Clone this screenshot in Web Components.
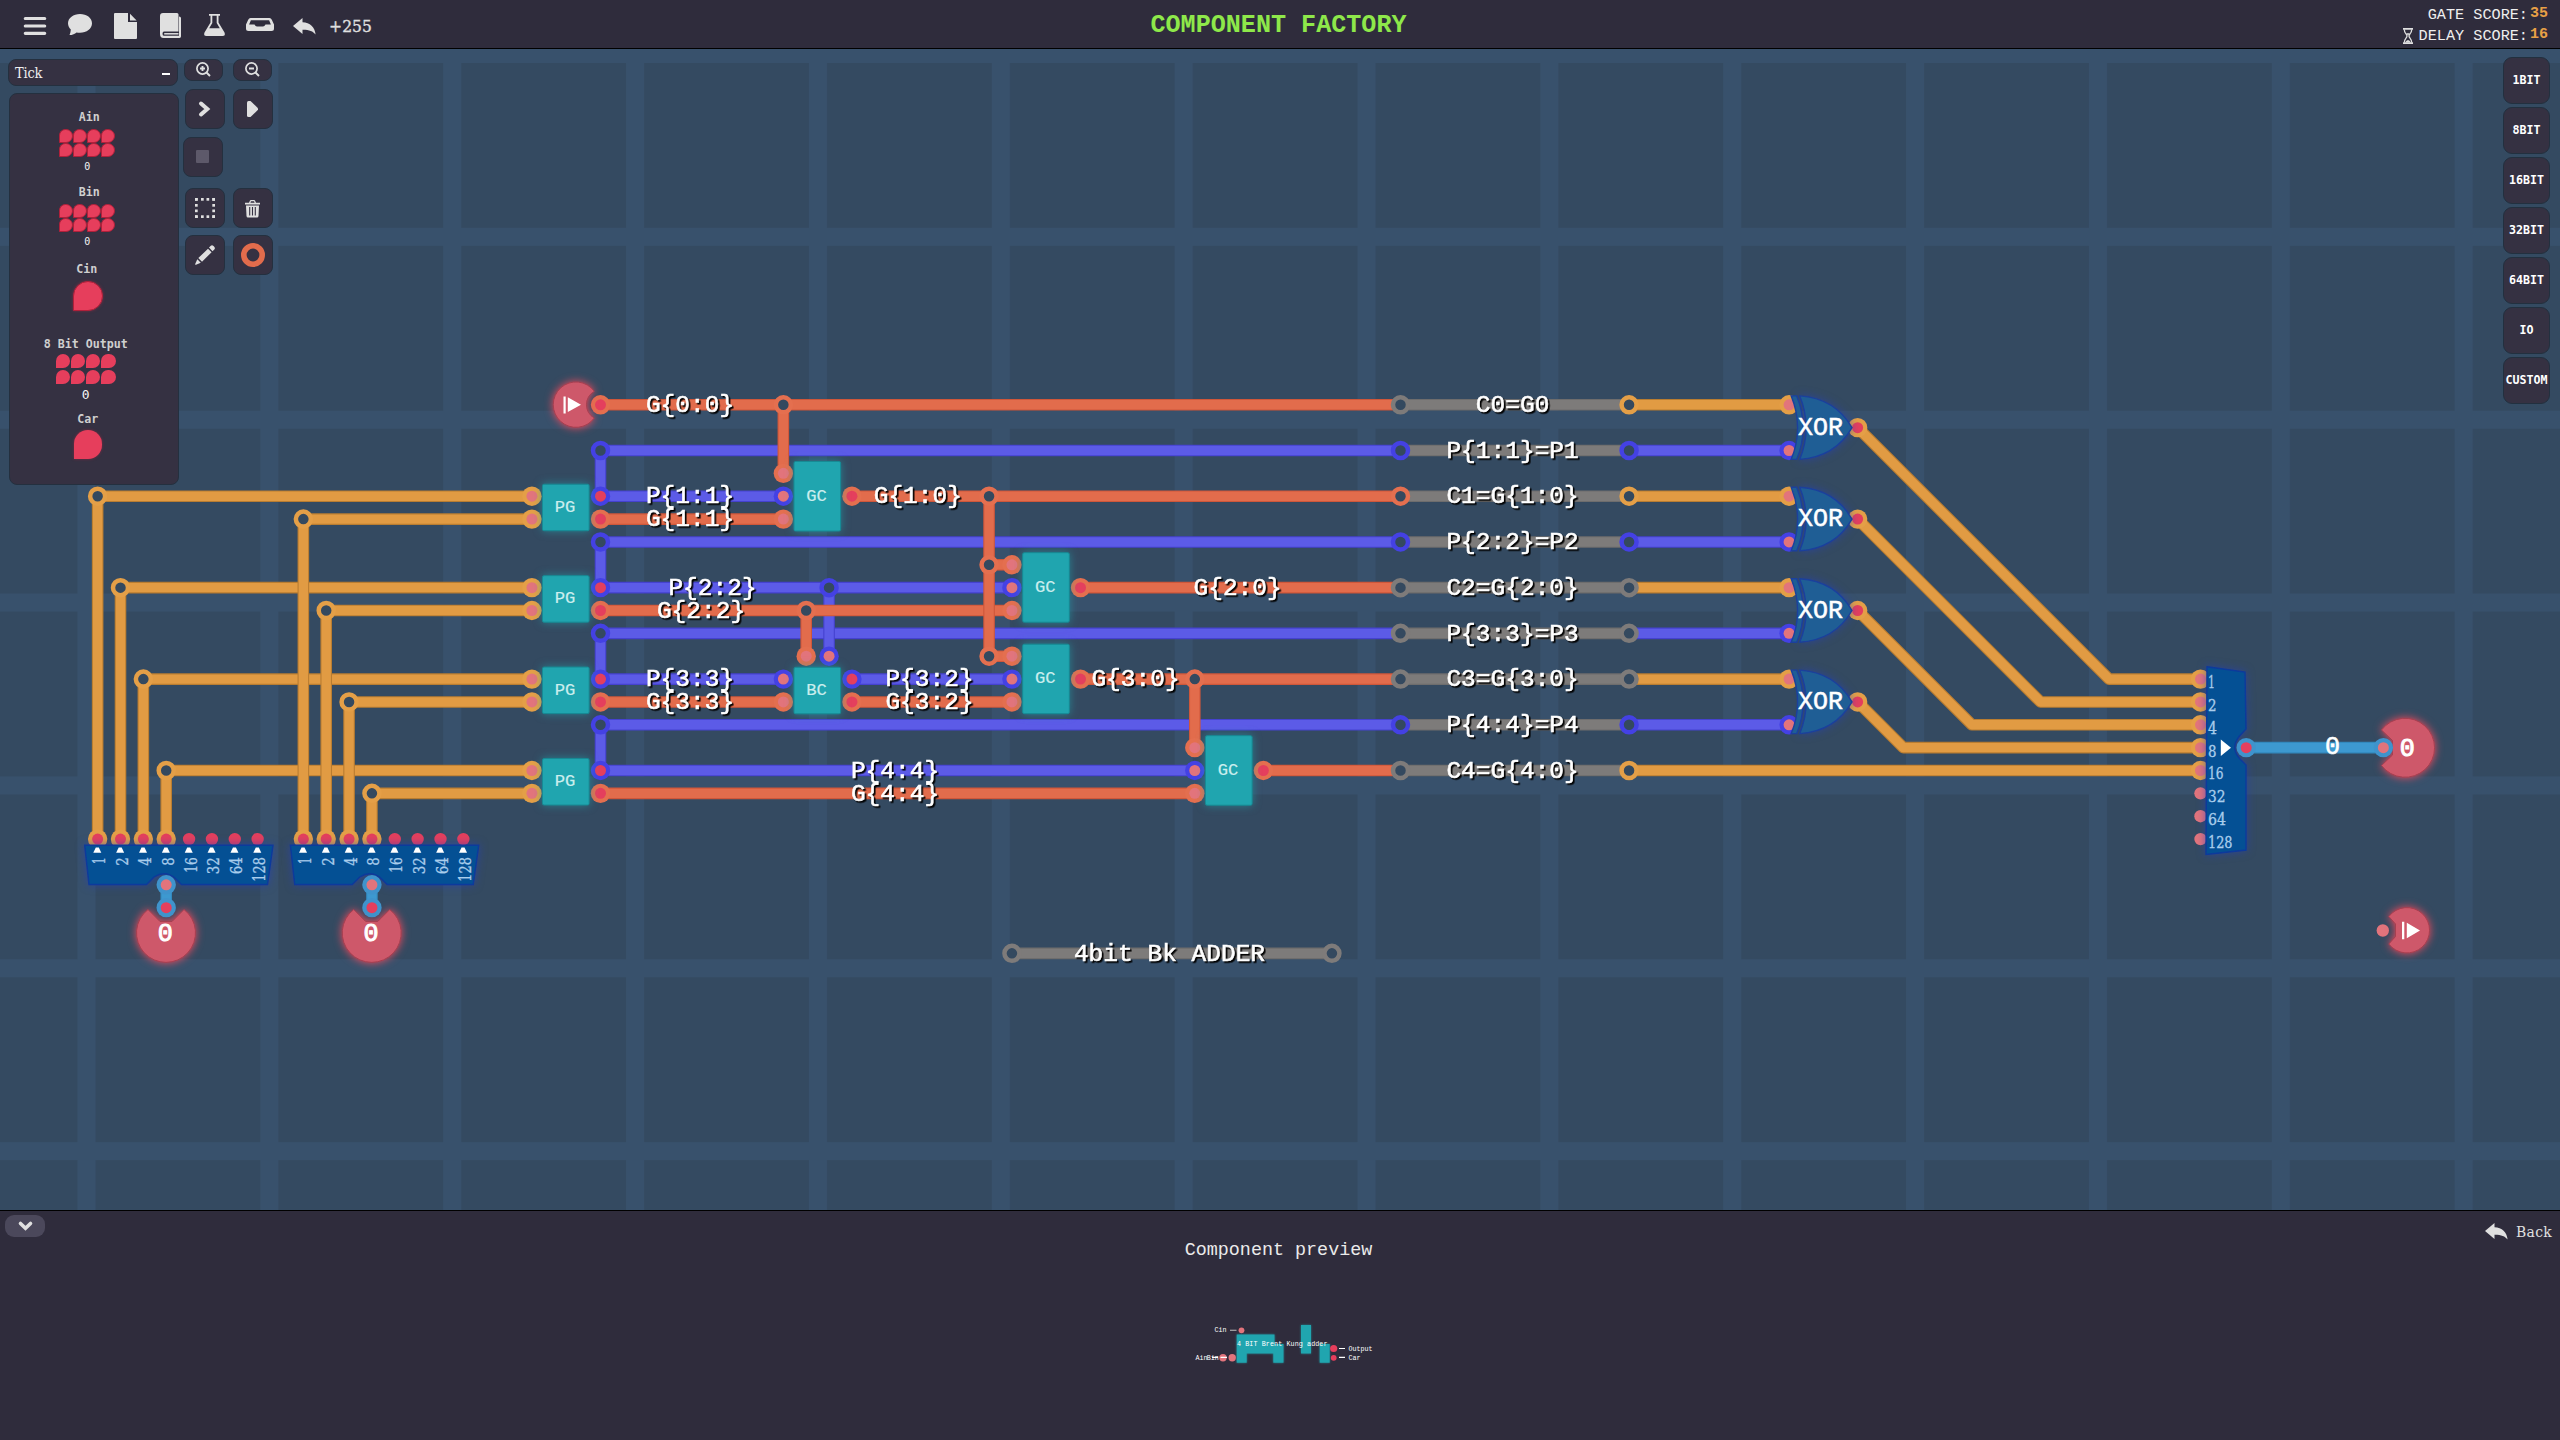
<!DOCTYPE html>
<html lang="en">
<head>
<meta charset="utf-8">
<title>Component Factory</title>
<style>
html,body{margin:0;height:100%;background:#344a61;overflow:hidden}
body{font-family:"Liberation Mono",monospace;color:#fff}
</style>
</head>
<body>
<factory-app></factory-app>
<script>
const define=(name,markup,setup)=>{
  customElements.define(name,class extends HTMLElement{
    connectedCallback(){
      if(this.shadowRoot)return;
      const root=this.attachShadow({mode:'open'});
      root.innerHTML=typeof markup==='function'?markup(this):markup;
      if(setup)setup(this,root);
    }
  });
};

/* ---------- icons ---------- */
const ICONS={
  menu:[22,18,'<path d="M1.3 1.5H20.7M1.3 9H20.7M1.3 16.3H20.7" stroke="#e0e0e0" stroke-width="3.2" stroke-linecap="round"/>'],
  chat:[24,22,'<path d="M12 0C5.4 0 0 4 0 9.3c0 2.6 1.2 4.700 2.800 6.300C2.600 17.800 2.300 19.800 1.500 21c3 0 5.400-1.300 7-2.600 1.100.3 2.300.4 3.500.4 6.600 0 12-4.100 12-9.500S18.600 0 12 0z"/>'],
  file:[23,26,'<path d="M1 0H14V9H23V25Q23 26 22 26H1Q0 26 0 25V1Q0 0 1 0zM16 .8L22.600 7.600H16z"/>'],
  book:[21,25,'<path fill-rule="evenodd" d="M3 0H17Q18.500 0 18.500 1.500V18.500H4Q2.500 18.600 2.500 20.800T4 22.800H19V3.400Q21 3.400 21 5V23.500Q20.700 25 19.200 25H3.500Q0 25 0 21V3Q0 0 3 0z"/><path d="M4.200 20.800H18.500" stroke="#e0e0e0" stroke-width="1.500"/>'],
  flask:[21,22,'<path fill-rule="evenodd" d="M5 0H16V1.800H14.500V8.500L20.500 18.500Q21.800 22 18.500 22H2.500Q-.8 22 .5 18.500L6.500 8.500V1.800H5zM8.300 1.800V9L5.200 14.200H15.800L12.700 9V1.800z"/>'],
  tray:[28,13,'<path fill-rule="evenodd" d="M4.500 0H23.500Q25 .2 25.800 1.800L28 6.500V10.500Q28 13 25.500 13H2.500Q0 13 0 10.500V6.500L2.200 1.800Q3 .2 4.500 0zM4.900 2.300L3.100 6.600H8.500Q9.500 8.500 11 8.500H17Q18.500 8.500 19.500 6.600H24.900L23.100 2.300z"/>'],
  reply:[23,17,'<path d="M9.500 0V4.200C17 4.500 22 9 22.600 16.500 20 13 16 11.600 9.500 11.700V16L0 8z"/>'],
  hourglass:[10,16,'<path d="M0 .9H10M0 15.100H10" stroke="#e0e0e0" stroke-width="1.800"/><path d="M1.300 1.500C1.300 5.500 4 6 4 8S1.300 10.500 1.300 14.500M8.700 1.500C8.700 5.500 6 6 6 8S8.700 10.500 8.700 14.500" fill="none" stroke="#e0e0e0" stroke-width="1.300"/><path d="M2 14.500Q5 9.500 8 14.500zM3.200 5.200H6.800L5 7.500z"/>'],
  zoomin:[15,15,'<circle cx="6.500" cy="6.500" r="5.600" fill="none" stroke="#e0e0e0" stroke-width="1.700"/><path d="M10.500 10.500L14 14M6.500 4V9M4 6.500H9" stroke="#e0e0e0" stroke-width="1.900"/>'],
  zoomout:[15,15,'<circle cx="6.500" cy="6.500" r="5.600" fill="none" stroke="#e0e0e0" stroke-width="1.700"/><path d="M10.500 10.500L14 14M4 6.500H9" stroke="#e0e0e0" stroke-width="1.900"/>'],
  next:[11,16,'<path d="M2 2.500L8.300 8L2 13.500" fill="none" stroke="#e0e0e0" stroke-width="4" stroke-linecap="round" stroke-linejoin="miter"/>'],
  play:[11,16,'<path d="M0 1.500Q0 0 1.500 0H3.500L11 7.200V8.800L3.500 16H1.500Q0 16 0 14.500z"/>'],
  stop:[13,13,'<rect width="13" height="13" rx="1" fill="#5d596a"/>'],
  select:[20,20,(()=>{let s='';for(const i of [0,6,11.500,17.300])s+=`<rect x="${i}" y="0" width="2.700" height="2.700"/><rect x="${i}" y="17.300" width="2.700" height="2.700"/><rect x="0" y="${i}" width="2.700" height="2.700"/><rect x="17.300" y="${i}" width="2.700" height="2.700"/>`;return s})()],
  trash:[15,18,'<path fill-rule="evenodd" d="M0 2.700H4L5 .6Q5.300 0 6 0H9Q9.700 0 10 .6L11 2.700H15V4.500H0zM5.400 2.700H9.600L9 1.300H6zM1 5.500H14L13.500 16Q13.400 17.500 12 17.500H3Q1.600 17.500 1.500 16z"/><path d="M4.700 7V15.500M7.500 7V15.500M10.300 7V15.500" stroke="#353142" stroke-width="1.100"/>'],
  pencil:[20,20,'<path d="M14 2.500L15.800.7Q17.200-.3 18.500 1L19.200 1.800Q20.500 3.200 19.300 4.500L17.500 6.300zM13 3.700L16.600 7.200 7 16.800 3.300 13.100zM2.300 14.300L5.800 17.800 1 19.700Q0 20 .2 18.900z"/>'],
  ring:[24,24,'<circle cx="12" cy="12" r="9.200" fill="none" stroke="#e26c4c" stroke-width="5.600"/>'],
  down:[15,10,'<path d="M2.500 2.500L7.500 7.300L12.500 2.500" fill="none" stroke="#e0e0e0" stroke-width="3.600" stroke-linecap="round"/>']
};
define('icon-glyph',h=>{
  const [w,ht,body]=ICONS[h.getAttribute('name')];
  return `<style>:host{display:block;flex:none;width:${w}px;height:${ht}px}svg{display:block;overflow:visible;fill:#e0e0e0}</style><svg width="${w}" height="${ht}" viewBox="0 0 ${w} ${ht}">${body}</svg>`;
});

/* ---------- top bar ---------- */
define('score-line',`<style>
:host{display:flex;align-items:center;justify-content:flex-end;height:20.500px;font-size:15.200px;color:#eee;white-space:pre}
b{font-size:15px;color:#e8a046;margin:-3px 0 0 2px}
</style><slot name="icon"></slot><span><slot></slot></span><b><slot name="value"></slot></b>`);

define('top-bar',`<style>
:host{display:grid;grid-template-columns:1fr auto 1fr;height:48px;background:#2f2c3c;border-bottom:1px solid #000;box-sizing:content-box}
.left{display:flex;align-items:center;padding:0 0 2px 24px;gap:22px}
.left span{font:17.300px "DejaVu Serif Condensed","DejaVu Serif",serif;color:#e0e0e0;margin:2px 0 0 -9px;letter-spacing:.1px;-webkit-text-stroke:.3px #e0e0e0}
h1{margin:0 0 0 -3px;padding-top:1px;font:bold 25.100px/50px "Liberation Mono",monospace;color:#8ee84a}
.right{padding:5px 12px 0 0}
</style>
<div class="left"><icon-glyph name="menu" style="margin-top:3px"></icon-glyph><icon-glyph name="chat"></icon-glyph><icon-glyph name="file" style="margin-top:3px"></icon-glyph><icon-glyph name="book" style="margin:2px 0 0 1px"></icon-glyph><icon-glyph name="flask" style="margin:1px 0 0 1px"></icon-glyph><icon-glyph name="tray" style="margin-left:-1px"></icon-glyph><icon-glyph name="reply" style="margin:3px 0 0 -3px"></icon-glyph><span>+255</span></div>
<h1>COMPONENT FACTORY</h1>
<div class="right"><score-line>GATE SCORE:<span slot="value">35</span></score-line><score-line><icon-glyph slot="icon" name="hourglass" style="margin-right:6px"></icon-glyph>DELAY SCORE:<span slot="value">16</span></score-line></div>`);

/* ---------- circuit ---------- */
const U=160/7, X=i=>+(600.5+i*U).toFixed(2), Y=j=>+(404.8+j*U).toFixed(2);
const COL={
  o:['#e19b43','#b97d31','#e49f47'], r:['#e26c4c','#cf573a','#e46f4f'],
  b:['#5c5be7','#4542cf','#4441e4'], g:['#7d7b7a','#6e6d6d','#7e7b7a'], s:['#3d99d0','#3389bd','#3f93cc']
};
const wire=(c,...p)=>{
  const pts=p.map(([i,j])=>X(i)+','+Y(j)).join(' ');
  return `<polyline points="${pts}" stroke="${COL[c][1]}" stroke-width="11.600"/><polyline points="${pts}" stroke="${COL[c][0]}" stroke-width="9.400"/>`;
};
const node=(c,i,j)=>`<circle cx="${X(i)}" cy="${Y(j)}" r="7.500" fill="#34495f" stroke="${COL[c][2]}" stroke-width="4.500"/>`;
const pin=(c,i,j,out)=>(c?`<circle cx="${X(i)}" cy="${Y(j)}" r="9.700" fill="${COL[c][2]}"/>`:'')+`<circle cx="${X(i)}" cy="${Y(j)}" r="${c?5.500:6.200}" fill="${out?'#e43f5d':'#e2747c'}"/>`;
const label=(t,x,j)=>`<text class="lab" x="${x}" y="${Y(j)+7.200}">${t}</text>`;
const block=(t,x,y,h)=>`<rect x="${x}" y="${y}" width="46.600" height="${h}" rx="1.500" fill="#20a5af" stroke="#178a94" stroke-width="1" filter="url(#teal)"/><text class="blk" x="${x+22.600}" y="${y+h/2+4.300}">${t}</text>`;

function circuit(){
  let w='',n='',p='',b='',t='';
  for(let k=0;k<4;k++){
    const r=4+4*k;
    w+=wire('o',[-22+k,19],[-22+k,r],[-3,r]);
    n+=node('o',-22+k,r);
    p+=pin('o',-3,r)+pin('o',-3,r+1);
    b+=block('PG',542.500,Y(r)-12,46.500);
  }
  for(let k=0;k<4;k++){
    const r=5+4*k;
    w+=wire('o',[-13+k,19],[-13+k,r],[-3,r]);
    n+=node('o',-13+k,r);
  }
  w+=wire('r',[0,0],[35,0]);
  for(const r of [2,6,10,14]){ w+=wire('b',[0,r+2],[0,r],[35,r]); n+=node('b',0,r); }
  w+=wire('b',[0,4],[8,4])+wire('r',[0,5],[8,5])+wire('b',[0,8],[18,8])+wire('b',[10,8],[10,11])+wire('r',[0,9],[18,9])+wire('r',[9,9],[9,11]);
  w+=wire('b',[0,12],[8,12])+wire('r',[0,13],[8,13])+wire('b',[11,12],[18,12])+wire('r',[11,13],[18,13]);
  w+=wire('b',[0,16],[26,16])+wire('r',[0,17],[26,17]);
  w+=wire('r',[8,0],[8,3])+wire('r',[11,4],[35,4])+wire('r',[21,8],[35,8])+wire('r',[21,12],[35,12])+wire('r',[29,16],[35,16]);
  w+=wire('r',[17,4],[17,11],[18,11])+wire('r',[17,7],[18,7])+wire('r',[26,12],[26,15]);
  n+=node('r',8,0)+node('r',17,4)+node('r',17,7)+node('r',17,11)+node('b',10,8)+node('r',9,9)+node('r',26,12);
  p+=pin('r',0,0,1);
  for(const r of [4,8,12,16]) p+=pin('b',0,r,1)+pin('r',0,r+1,1);
  for(const [i,r] of [[8,3],[18,7],[18,11],[26,15]]) p+=pin('r',i,r)+pin('b',i,r+1)+pin('r',i,r+2)+pin('r',i+3,r+1,1);
  p+=pin('b',8,12)+pin('r',8,13)+pin('r',9,11)+pin('b',10,11)+pin('b',11,12,1)+pin('r',11,13,1);
  b+=block('GC',794,461.500,69.500)+block('GC',1022.700,552.700,69.500)+block('GC',1022.700,644.200,69.500)+block('GC',1205.500,735.700,69.500)+block('BC',794,667.300,46.500);

  const names=['C0=G0','P{1:1}=P1','C1=G{1:0}','P{2:2}=P2','C2=G{2:0}','P{3:3}=P3','C3=G{3:0}','P{4:4}=P4','C4=G{4:0}'];
  const L='gbrbgggbg',R='obobgggbo';
  names.forEach((s,k)=>{
    const r=2*k;
    w+=wire('g',[35,r],[45,r])+wire(k%2?'b':'o',[45,r],[k==8?70:52,r]);
    n+=node(L[k],35,r)+node(R[k],45,r);
    t+=label(s,1512.600,r);
    if(k<8)p+=pin(k%2?'b':'o',52,r);
  });
  [[1,66,12],[5,63,13],[9,60,14],[13,57,15]].forEach(([r,i,j])=>{
    w+=wire('o',[55,r],[i,j],[70,j]);
    p+=pin('o',55,r,1);
    const y=Y(r);
    b+=`<g transform="translate(1790.700 ${y-32.300})" fill="#1f5e95" stroke="#1b409d" stroke-width="1.400"><path filter="url(#blue)" d="M9 .5C31 2 49 11 61.300 32.300C49 53.500 31 62.600 9 64C17.500 44 17.500 21 9 .5z"/><path d="M.5.5H6C14.500 21 14.500 44 6 64H.5C9 44 9 21 .5.5z"/></g><text class="xor" x="1820.600" y="${y+7.200}">XOR</text>`;
  });
  for(let k=0;k<8;k++) p+=pin(k<5?'o':'',70,12+k);

  /* byte splitters */
  for(const o of [-22,-13]){
    const dx=X(o)-97.640, bits=[1,2,4,8,16,32,64,128];
    w+=wire('s',[o+3,21],[o+3,22]);
    b+=`<g transform="translate(${dx.toFixed(2)} 0)"><path filter="url(#blue)" fill="#045094" stroke="#0d3a9c" stroke-width="1.400" d="M84.700 845.300H273L267.500 884.500H181.500L176.500 879.500Q166 869.500 154 877L146.500 884.500H89z"/>`;
    bits.forEach((v,k)=>{
      const x=97.300+k*U;
      p+=pin(k<4?'o':'',o+k,19,1);
      const len=[7,8.500,8.500,8.500,15.500,17,17,24.500][k];
      b+=`<path d="M${x-4} 852.800L${x-1.500} 847.500H${x+1.500}L${x+4} 852.800z" fill="#fff"/><text class="slab" text-anchor="end" textLength="${len}" lengthAdjust="spacingAndGlyphs" transform="translate(${x+7.800} 857.200) rotate(-90)">${v}</text>`;
    });
    b+=`<path filter="url(#red)" fill="#ce586a" stroke="#a63f50" stroke-width="1" d="M148 909.500L160 921.500H172L184 909.500A29.500 29.500 0 1 1 148 909.500z"/><text class="num" x="165.200" y="941.300">0</text></g>`;
    t+=pin('s',o+3,21)+pin('s',o+3,22,1);
  }
  /* byte maker */
  b+=`<path filter="url(#blue)" fill="#045094" stroke="#0d3a9c" stroke-width="1.400" d="M2207 666.800L2245 672L2246 729L2239.500 736Q2230 747.500 2239.500 758.500L2246 765V850L2206 854.500z"/><path d="M2220.800 739.500L2231 747.700L2220.800 756z" fill="#fff"/>`;
  [1,2,4,8,16,32,64,128].forEach((v,k)=>{
    b+=`<text class="slab" x="2208" y="${Y(12+k)+8.900}" textLength="${[7,8.500,9,8.500,15.500,17.500,18,24.500][k]}" lengthAdjust="spacingAndGlyphs">${v}</text>`;
  });
  w+=wire('s',[72,15],[78,15]);
  b+=`<path filter="url(#red)" fill="#ce586a" stroke="#a63f50" stroke-width="1" d="M2381.500 730L2392.500 740.500V755L2381.500 765.500A29.500 29.500 0 1 0 2381.500 730z"/><text class="num" x="2407.300" y="755.800">0</text>`;
  t+=pin('s',72,15,1)+pin('s',78,15)+`<text class="num" style="stroke-width:.6" x="2332.500" y="753.500">0</text>`;
  /* one-bit input and carry output */
  b+=`<path filter="url(#red)" fill="#ce586a" stroke="#a63f50" stroke-width="1" d="M594.300 391.300Q586.500 396 586.500 404.700Q586.500 413.500 594.300 418A22.700 22.700 0 1 1 594.300 391.300z"/><path fill="#fff" d="M563.500 396.500H565.700V413.500H563.500zM567.800 397.300L581 404.700L567.800 412z"/>`;
  b+=`<path filter="url(#red)" fill="#ce586a" stroke="#a63f50" stroke-width="1" d="M2388.800 916.500L2395.500 924V936.500L2388.800 944A22.700 22.700 0 1 0 2388.800 916.500z"/><path fill="#fff" d="M2402 921.700H2404.300V939.200H2402zM2406.800 922.800L2420 930.500L2406.800 938.200z"/>`;
  p+=`<circle cx="2382.800" cy="930.500" r="6.200" fill="#e2747c"/>`;

  w+=wire('g',[18,24],[32,24]); n+=node('g',18,24)+node('g',32,24);
  t+=label('4bit Bk ADDER',1169.500,24);
  for(const [s,x,j] of [['G{0:0}',690,0],['P{1:1}',690,4],['G{1:1}',690,5],['G{1:0}',917.800,4],['P{2:2}',712.500,8],['G{2:2}',701,9],['P{3:3}',690,12],['G{3:3}',690,13],['P{3:2}',929.500,12],['G{3:2}',929.500,13],['G{2:0}',1237.600,8],['G{3:0}',1135.500,12],['P{4:4}',895,16],['G{4:4}',895,17]]) t+=label(s,x,j);
  return w+n+p+b+t;
}
define('circuit-board',()=>`<style>
:host{display:block;background:#344a61;overflow:hidden}
svg{display:block}
polyline{fill:none;stroke-linejoin:round}
text{font-family:"Liberation Mono",monospace}
.lab{font-size:24.500px;fill:#fff;text-anchor:middle;stroke:#fff;stroke-width:.6px;filter:url(#hard)}
.blk{font-size:17.200px;fill:#cbeeee;text-anchor:middle;stroke:#cbeeee;stroke-width:.2px}
.xor{font-size:25px;fill:#fff;text-anchor:middle;stroke:#fff;stroke-width:.5px}
.num{font-size:25px;fill:#fff;text-anchor:middle;stroke:#fff;stroke-width:1px}
.slab{font:16.500px "DejaVu Serif Condensed","DejaVu Serif",serif;fill:#a9cdec;stroke:#a9cdec;stroke-width:.3px}
</style>
<svg width="2560" height="1161" viewBox="0 49 2560 1161">
<defs>
<pattern id="grid" width="${8*U}" height="${8*U}" patternUnits="userSpaceOnUse" x="77.500" y="45"><path d="M0 0H${8*U}V18H18V${8*U}H0z" fill="#38516c"/></pattern>
<filter id="hard" x="-5%" y="-10%" width="110%" height="130%" color-interpolation-filters="sRGB"><feDropShadow dx="1.600" dy="1.600" stdDeviation="0" flood-color="#000" flood-opacity="1"/></filter>
<filter id="teal" x="-50%" y="-50%" width="200%" height="200%" color-interpolation-filters="sRGB"><feDropShadow dx="0" dy="0" stdDeviation="4" flood-color="#20a5af" flood-opacity=".6"/></filter>
<filter id="blue" x="-30%" y="-50%" width="160%" height="200%" color-interpolation-filters="sRGB"><feDropShadow dx="0" dy="0" stdDeviation="4.500" flood-color="#2340c0" flood-opacity=".6"/></filter>
<filter id="red" x="-50%" y="-50%" width="200%" height="200%" color-interpolation-filters="sRGB"><feDropShadow dx="0" dy="0" stdDeviation="4.500" flood-color="#f04a5c" flood-opacity="1"/></filter>
</defs>
<rect y="49" width="2560" height="1161" fill="url(#grid)"/>${circuit()}</svg>`);

/* ---------- left panel ---------- */
define('signal-drops',h=>{
  const n=+h.getAttribute('count')||1,s=+h.getAttribute('size'),gx=+h.getAttribute('gx')||0,gy=+h.getAttribute('gy')||0,bd=h.hasAttribute('edge')?1.500:0;
  return `<style>:host{display:grid;width:max-content;grid-template-columns:repeat(${n>1?4:1},${s}px);column-gap:${gx}px;row-gap:${gy}px}
i{width:${s}px;height:${s}px;box-sizing:border-box;background:#e63e5c;border:${bd}px solid #b0203a;border-radius:50% 50% 50% 0;${n>1?(bd?'border-radius:45% 50% 50% 0;':''):'box-shadow:0 0 3px #c2284388;'}}</style>${'<i></i>'.repeat(n)}`;
});
define('signal-item',`<style>
:host{display:flex;flex-direction:column;align-items:center;font-size:11.650px;line-height:12px;color:#cfcfcf}
.name{font-family:"DejaVu Sans Mono",monospace;font-weight:bold;margin-bottom:var(--gap,5px);position:relative;left:var(--dx,0)}
.value{font-family:"DejaVu Sans Mono",monospace;color:#f4f4f4;margin-top:var(--vgap,5px);font-size:var(--vsize,10px);line-height:10px}
</style><span class="name"><slot name="name"></slot></span><slot></slot><span class="value"><slot name="value"></slot></span>`);

define('tick-panel',`<style>
:host{display:flex;flex-direction:column}
header{display:flex;align-items:center;justify-content:space-between;width:169.500px;height:26.500px;box-sizing:border-box;padding:1px 7px 0 6px;background:#353142;border:1px solid #24303f;border-radius:8px;font:14.500px "DejaVu Serif Condensed","DejaVu Serif",serif;color:#eee;letter-spacing:-.2px}
header i{width:8px;height:2px;background:#fff;margin-top:3px}
section{margin:7.500px 0 0 1px;width:169.500px;height:391.500px;box-sizing:border-box;background:#353142;border:1px solid #24303f;border-radius:8px;display:grid;grid-template-rows:75px 77px 75px 75px auto;padding:17px 0 0;justify-items:center}
</style>
<header><span>Tick</span><i></i></header>
<section>
<signal-item style="margin-left:-13px;--gap:6px;--dx:2px"><span slot="name">Ain</span><signal-drops count="8" size="14" edge></signal-drops><span slot="value">0</span></signal-item>
<signal-item style="margin-left:-13px;--gap:6px;--dx:2px"><span slot="name">Bin</span><signal-drops count="8" size="14" edge></signal-drops><span slot="value">0</span></signal-item>
<signal-item style="margin-left:-12px;--gap:6px;--dx:-1px"><span slot="name">Cin</span><signal-drops size="30" edge></signal-drops></signal-item>
<signal-item style="margin-left:-16px;--gap:4px;--vsize:13px;--vgap:6px"><span slot="name">8 Bit Output</span><signal-drops count="8" size="14.300" gx="0.800" gy="1.700"></signal-drops><span slot="value">0</span></signal-item>
<signal-item style="margin-left:-12px;--gap:5px"><span slot="name">Car</span><signal-drops size="28.500"></signal-drops></signal-item>
</section>`);

/* ---------- buttons ---------- */
define('tool-button',`<style>
:host{display:flex;align-items:center;justify-content:center;box-sizing:border-box;width:40px;height:40px;background:#353142;border:1px solid #24303f;border-radius:8px}
:host([flat]){width:39px;height:22px}
</style><slot></slot>`);
define('tool-grid',`<style>
:host{display:flex;flex-direction:column}
.row{display:flex;gap:8px;margin-left:2px}
</style>
<div class="row" style="gap:10px;margin-left:1px"><tool-button flat><icon-glyph name="zoomin" style="margin:-1px 0 0 -1px"></icon-glyph></tool-button><tool-button flat><icon-glyph name="zoomout" style="margin:-1px 0 0 -1px"></icon-glyph></tool-button></div>
<div class="row" style="margin-top:8px"><tool-button><icon-glyph name="next" style="margin:-1px 0 0 -1px"></icon-glyph></tool-button><tool-button><icon-glyph name="play" style="margin:-1px 0 0 -1px"></icon-glyph></tool-button></div>
<div class="row" style="margin:8px 0 0"><tool-button><icon-glyph name="stop" style="margin:-1px 0 0 -1px"></icon-glyph></tool-button></div>
<div class="row" style="margin-top:11px"><tool-button><icon-glyph name="select"></icon-glyph></tool-button><tool-button><icon-glyph name="trash" style="margin:2px 0 0 -1px"></icon-glyph></tool-button></div>
<div class="row" style="margin-top:7px"><tool-button><icon-glyph name="pencil"></icon-glyph></tool-button><tool-button><icon-glyph name="ring"></icon-glyph></tool-button></div>`);
define('category-list',`<style>
:host{display:flex;flex-direction:column;gap:3px}
button{all:unset;box-sizing:border-box;width:47px;height:47px;background:#353142;border:1px solid #22303f;border-radius:9px;display:flex;align-items:center;justify-content:center;color:#fff;font:bold 11.650px "DejaVu Sans Mono",monospace;padding-bottom:2px}
</style><button>1BIT</button><button>8BIT</button><button>16BIT</button><button>32BIT</button><button>64BIT</button><button>IO</button><button>CUSTOM</button>`);

/* ---------- preview dock ---------- */
define('component-preview',`<style>
:host{display:block}svg{display:block}
text{font:6.700px "Liberation Mono",monospace;fill:#fff}
</style>
<svg width="200" height="50" viewBox="1180 1320 200 50">
<defs><filter id="glow" x="-30%" y="-50%" width="160%" height="200%" color-interpolation-filters="sRGB"><feDropShadow dx="0" dy="0" stdDeviation="1.300" flood-color="#20a5af" flood-opacity=".7"/></filter></defs>
<path filter="url(#glow)" fill="#20a5af" d="M1236.700 1334.500H1274.500V1344H1283.500V1362.700H1273.300V1353.500H1246.700V1362.700H1236.700zM1301 1325H1311V1353.500H1301zM1319.700 1344H1329.700V1362.700H1319.700z"/>
<g fill="#e2747c"><circle cx="1241.500" cy="1330.300" r="2.900"/><circle cx="1223" cy="1357.800" r="3.700"/><circle cx="1232.200" cy="1357.800" r="3.700"/></g>
<g fill="#e63e5c"><circle cx="1333.700" cy="1348.500" r="3.600"/><circle cx="1333.700" cy="1357.800" r="2.900"/></g>
<path d="M1220.500 1357.400H1227M1212 1357.400H1218M1339 1348.500H1345M1339 1357.400H1345" stroke="#fff" stroke-width="1.200"/><path d="M1230 1330.300H1236.500" stroke="#aaa" stroke-width="1.200"/>
<text x="1214.500" y="1332.200">Cin</text><text x="1195.500" y="1359.600">Ain</text><text x="1206.800" y="1359.600">Bin</text>
<text x="1348.500" y="1350.600">Output</text><text x="1348.500" y="1359.800">Car</text>
<text x="1237" y="1346" textLength="90.500">4 BIT Brent Kung adder</text>
</svg>`);
define('preview-dock',`<style>
:host{display:grid;grid-template-columns:1fr auto 1fr;background:#2f2c3c;border-top:1px solid #000;box-sizing:border-box;height:230px}
.toggle{width:40px;height:22px;border-radius:9px;background:#4b485b;margin:4px 0 0 5px;display:flex;align-items:center;justify-content:center}
.mid{display:flex;flex-direction:column;align-items:center;width:200px}
h2{margin:28px 0 0 -3px;font:400 18.400px/24px "Liberation Mono",monospace;color:#eaeaea}
component-preview{margin-top:57px}
.back{justify-self:end;display:flex;align-items:center;height:17px;gap:8px;margin:12px 8px 0 0;font:15.500px "DejaVu Serif Condensed","DejaVu Serif",serif;color:#e0e0e0;letter-spacing:.3px}
</style>
<div class="toggle"><icon-glyph name="down"></icon-glyph></div>
<div class="mid"><h2>Component preview</h2><component-preview></component-preview></div>
<div class="back"><icon-glyph name="reply"></icon-glyph><span>Back</span></div>`);

define('factory-app',`<style>
:host{display:flex;flex-direction:column;width:2560px;height:1440px}
main{position:relative;height:1161px}
tick-panel{position:absolute;left:8px;top:10px}
tool-grid{position:absolute;left:183px;top:10px}
category-list{position:absolute;right:10px;top:8px}
</style>
<top-bar></top-bar>
<main><circuit-board></circuit-board><tick-panel></tick-panel><tool-grid></tool-grid><category-list></category-list></main>
<preview-dock></preview-dock>`);
</script>
</body>
</html>
